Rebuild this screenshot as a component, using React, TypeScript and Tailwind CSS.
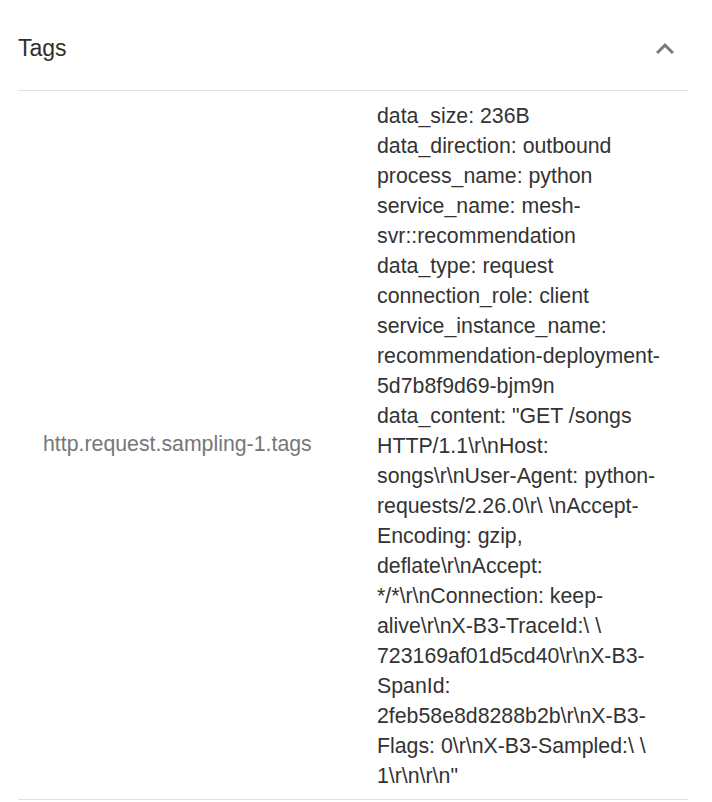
const tags = [
  "data_size: 236B",
  "data_direction: outbound",
  "process_name: python",
  "service_name: mesh-svr::recommendation",
  "data_type: request",
  "connection_role: client",
  "service_instance_name: recommendation-deployment-5d7b8f9d69-bjm9n",
  String.raw`data_content: "GET /songs HTTP/1.1\r\nHost: songs\r\nUser-Agent: python-requests/2.26.0\r\ \nAccept-Encoding: gzip, deflate\r\nAccept: */*\r\nConnection: keep-alive\r\nX-B3-TraceId:\ \ 723169af01d5cd40\r\nX-B3-SpanId: 2feb58e8d8288b2b\r\nX-B3-Flags: 0\r\nX-B3-Sampled:\ \ 1\r\n\r\n"`,
];

export default function App() {
  return (
    <div
      className="min-h-[802px] bg-white pl-[18px] pr-[24px]"
      style={{ fontFamily: '"Liberation Sans", Arial, Helvetica, sans-serif' }}
    >
      {/* Section header */}
      <div className="flex h-[90px] items-center justify-between pt-[6px]">
        <span className="text-[23px] leading-none text-[#2f2f2f]">Tags</span>
        <svg
          className="mr-[5px] mt-[2px] h-[36px] w-[36px] text-[#7a7a7a]"
          viewBox="0 0 24 24"
          fill="currentColor"
          aria-hidden="true"
        >
          <path d="M12 8l-6 6 1.41 1.41L12 10.83l4.59 4.58L18 14z" />
        </svg>
      </div>

      {/* Tag row */}
      <div className="flex border-y border-[#e0e0e0]">
        <div className="flex w-[335px] shrink-0 items-center pl-[25px] text-[21.3px] text-[#777777]">
          http.request.sampling-1.tags
        </div>
        <div className="min-w-0 flex-1 pb-[8px] pl-[24px] pr-[20px] pt-[10px] text-[21.3px] leading-[30px] text-[#333333]">
          {tags.map((t) => (
            <div key={t}>{t}</div>
          ))}
        </div>
      </div>
    </div>
  );
}
